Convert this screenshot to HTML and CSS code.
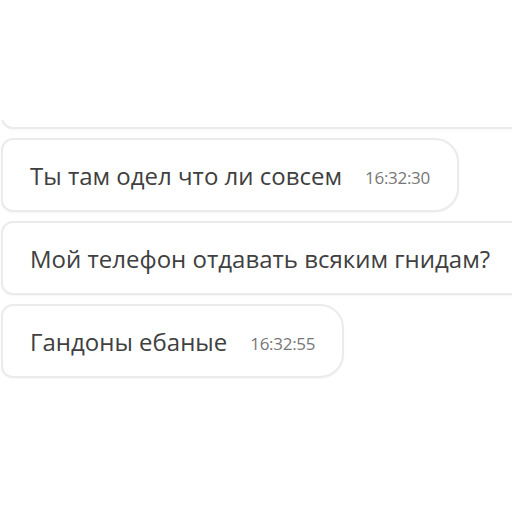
FILE: index.html
```html
<!DOCTYPE html>
<html lang="ru">
<head>
  <meta charset="UTF-8">
  <meta name="viewport" content="width=device-width, initial-scale=1.0">
  <title>Чат</title>
  <link rel="stylesheet" href="styles.css">
</head>
<body>

<div class="chat">
  <div class="chat-list">
    <!-- предыдущее сообщение, видно только нижний край -->
    <div class="msg msg-prev"></div>
    <div class="msg">
      <span class="msg-text">Ты там одел что ли совсем</span>
      <span class="msg-time">16:32:30</span>
    </div>
    <div class="msg">
      <span class="msg-text">Мой телефон отдавать всяким гнидам?</span>
      <span class="msg-time">16:32:41</span>
    </div>
    <div class="msg">
      <span class="msg-text">Гандоны ебаные</span>
      <span class="msg-time">16:32:55</span>
    </div>
  </div>
</div>

</body>
</html>
```

FILE: styles.css
```css
body {
  margin: 0;
  background-color: #fff;
  font-family: 'Open Sans', 'Noto Sans', sans-serif;
  overflow: hidden;
}
.chat {
  margin-top: 120px;
  height: 260px;
  overflow: hidden;
}
.chat-list {
  display: flex;
  flex-direction: column;
  align-items: flex-start;
  gap: 9px;
  margin-top: -65px;
  padding-left: 1px;
}
.msg {
  display: flex;
  align-items: center;
  gap: 23px;
  width: max-content;
  height: 74px;
  box-sizing: border-box;
  padding: 0 27px;
  background-color: #fff;
  border: 2px solid #ebebeb;
  border-radius: 12px 24px 24px 12px;
  box-shadow: 0 1px 2px rgba(0, 0, 0, 0.04);
}
.msg-prev {
  width: 640px;
}
.msg-text {
  font-size: 24px;
  color: #404040;
}
.msg-time {
  font-size: 17px;
  color: #777;
  letter-spacing: -0.3px;
  padding-top: 4px;
}
```
